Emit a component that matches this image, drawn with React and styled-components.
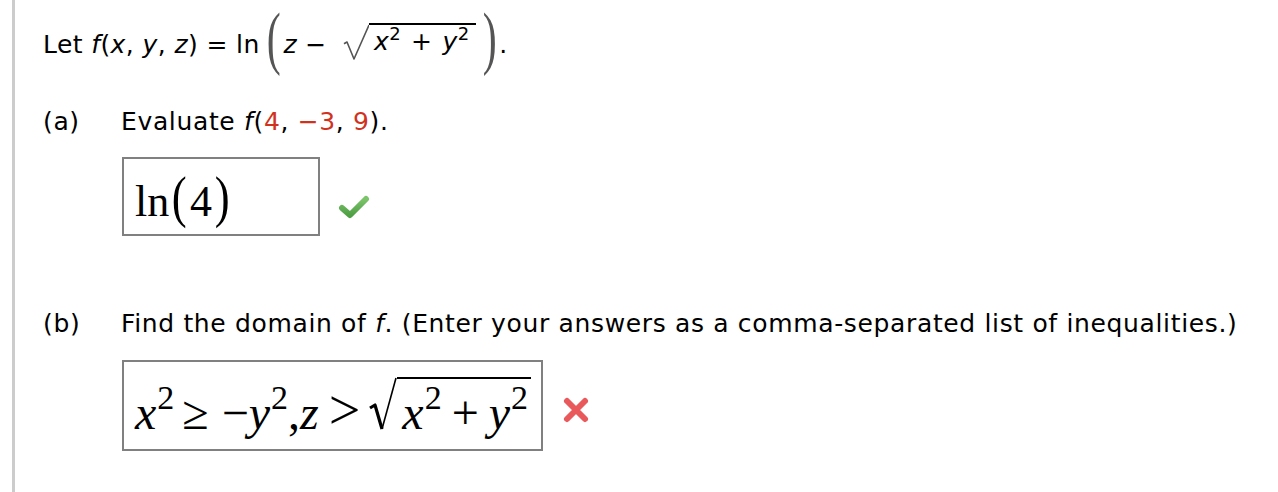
import React from 'react';
import styled, { createGlobalStyle } from 'styled-components';

const GlobalStyle = createGlobalStyle`
  html, body {
    margin: 0;
    padding: 0;
    background: #ffffff;
  }
  body {
    font-family: Verdana, "DejaVu Sans", sans-serif;
    color: #000;
  }
`;

export default function App() {
  return (
    <>
      <GlobalStyle />
      <Page>
        <Statement>
          Let&nbsp;<I>f</I>(<I>x</I>, <I>y</I>, <I>z</I>) = ln
          <BigParen>(</BigParen>
          <I>z</I>&nbsp;−&nbsp;
          <RadicalSign width={26} height={36} gap={8} />
          <Radicand>
            <I>x</I>
            <Sup>2</Sup>
            <Plus>+</Plus>
            <I>y</I>
            <Sup>2</Sup>
          </Radicand>
          <BigParen>)</BigParen>.
        </Statement>

        <PartRow top={33}>
          <PartLabel>(a)</PartLabel>
          <span>
            Evaluate <I>f</I>(<Red>4</Red>, <Red>−3</Red>, <Red>9</Red>).
          </span>
        </PartRow>
        <AnswerRow top={20}>
          <AnswerBox width={198} height={79}>
            <MathText size={44}>
              ln<MathParen>(</MathParen>4<MathParen>)</MathParen>
            </MathText>
          </AnswerBox>
          <CheckIcon />
        </AnswerRow>

        <PartRow top={73}>
          <PartLabel>(b)</PartLabel>
          <span>
            Find the domain of <I>f</I>. (Enter your answers as a comma-separated list of inequalities.)
          </span>
        </PartRow>
        <AnswerRow top={21}>
          <AnswerBox width={421} height={91} padTop={15}>
            <MathText size={48}>
              <MI>x</MI>
              <MSup>2</MSup>
              <Op left={8} right={13}>≥</Op>−<MI>y</MI>
              <MSup>2</MSup>,<MI>z</MI>
              <Op left={10} right={9} wide>&gt;</Op>
              <MathRadical>
                <svg width="28" height="55" viewBox="0 0 28 55">
                  <path d="M1 31 L6 28 L13 52" fill="none" stroke="#000" strokeWidth="3.2" strokeLinejoin="round" />
                  <path d="M13 52 L27 1" fill="none" stroke="#000" strokeWidth="1.6" />
                </svg>
              </MathRadical>
              <MathRadicand>
                <MI>x</MI>
                <MSup>2</MSup>
                <Op left={10} right={10}>+</Op>
                <MI>y</MI>
                <MSup>2</MSup>
              </MathRadicand>
            </MathText>
          </AnswerBox>
          <CrossIcon />
        </AnswerRow>
      </Page>
    </>
  );
}

function RadicalSign({ width, height, gap }) {
  return (
    <RadicalWrap gap={gap}>
      <svg width={width} height={height} viewBox={`0 0 ${width} ${height}`}>
        <path
          d={`M1 ${height * 0.55} L4 ${height * 0.5} L11 ${height - 1} L${width} 1`}
          fill="none"
          stroke="#555"
          strokeWidth="1.6"
          strokeLinejoin="round"
        />
      </svg>
    </RadicalWrap>
  );
}

function CheckIcon() {
  return (
    <IconWrap offset={10}>
      <svg width="32" height="26" viewBox="0 0 32 26">
        <defs>
          <linearGradient id="chk" x1="0" y1="0" x2="0" y2="1">
            <stop offset="0" stopColor="#7cc46a" />
            <stop offset="1" stopColor="#4f9f45" />
          </linearGradient>
        </defs>
        <path
          d="M4 14 L12 21 L28 5"
          fill="none"
          stroke="url(#chk)"
          strokeWidth="6"
          strokeLinecap="round"
          strokeLinejoin="round"
        />
      </svg>
    </IconWrap>
  );
}

function CrossIcon() {
  return (
    <IconWrap offset={4}>
      <svg width="30" height="30" viewBox="0 0 30 30">
        <path
          d="M6 6 L24 24 M24 6 L6 24"
          fill="none"
          stroke="#e9595b"
          strokeWidth="6"
          strokeLinecap="round"
        />
      </svg>
    </IconWrap>
  );
}

const Page = styled.div`
  margin-left: 12px;
  min-height: 492px;
  box-sizing: border-box;
  border-left: 3px solid #cccccc;
  padding-left: 28px;
  padding-top: 14px;
  font-size: 25px;
  letter-spacing: 0.65px;
`;

const Statement = styled.div`
  display: flex;
  align-items: center;
  height: 60px;
  white-space: pre;
  letter-spacing: 0.4px;
`;

const I = styled.i`
  font-style: italic;
`;

const Sup = styled.span`
  font-size: 18px;
  position: relative;
  top: -10px;
`;

const Plus = styled.span`
  margin: 0 10px;
`;

const BigParen = styled.span`
  font-family: "Liberation Serif", serif;
  font-size: 70px;
  color: #555;
  transform: translateY(-6px) scaleX(0.6);
  margin: 0 -2px 0 2px;
  line-height: 60px;
`;

const RadicalWrap = styled.span`
  display: flex;
  margin-left: ${p => p.gap}px;
  margin-top: -4px;
`;

const Radicand = styled.span`
  border-top: 2px solid #000;
  padding: 2px 6px 0 5px;
  margin-top: -6px;
  line-height: 30px;
`;

const PartRow = styled.div`
  display: flex;
  align-items: baseline;
  margin-top: ${p => p.top}px;
  line-height: 30px;
`;

const PartLabel = styled.span`
  width: 78px;
  flex: none;
`;

const Red = styled.span`
  color: #d0321e;
`;

const AnswerRow = styled.div`
  display: flex;
  align-items: center;
  margin-top: ${p => p.top}px;
  padding-left: 79px;
`;

const AnswerBox = styled.div`
  width: ${p => p.width}px;
  height: ${p => p.height}px;
  box-sizing: border-box;
  border: 2px solid #808080;
  display: flex;
  align-items: ${p => (p.padTop != null ? 'flex-start' : 'center')};
  padding-top: ${p => p.padTop || 0}px;
  padding-left: 11px;
`;

const MathText = styled.span`
  font-family: "Liberation Serif", "Times New Roman", serif;
  font-size: ${p => p.size}px;
  letter-spacing: 0;
  white-space: nowrap;
  display: flex;
  align-items: baseline;
`;

const MathParen = styled.span`
  font-size: 56px;
  font-weight: 300;
  transform: scaleX(0.8);
  margin: 0 1px;
`;

const MI = styled.i`
  font-style: italic;
`;

const MSup = styled.span`
  font-size: 34px;
  position: relative;
  top: -20px;
  margin-left: 1px;
`;

const Op = styled.span`
  margin: 0 ${p => p.right}px 0 ${p => p.left}px;
  font-size: ${p => (p.wide ? '56px' : 'inherit')};
  line-height: 1;
`;

const MathRadical = styled.span`
  display: flex;
  align-self: flex-start;
`;

const MathRadicand = styled.span`
  border-top: 2px solid #000;
  padding: 9px 3px 0 5px;
  line-height: 50px;
  display: flex;
  align-items: baseline;
`;

const IconWrap = styled.span`
  margin-left: 18px;
  margin-top: ${p => p.offset * 2}px;
  display: flex;
`;
